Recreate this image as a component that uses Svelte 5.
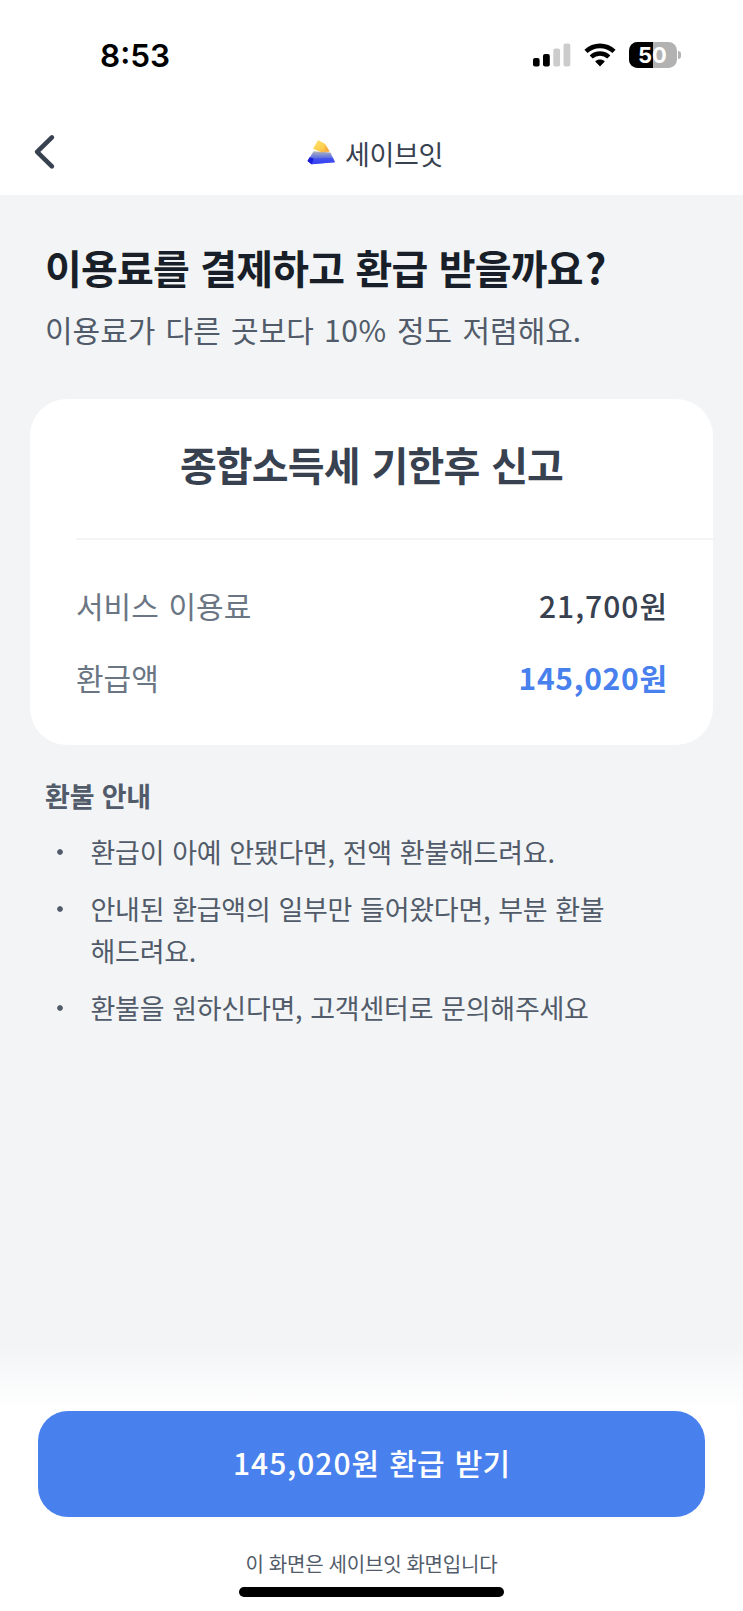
<script>
    let serviceFee = $state(21700);
    let refund = $state(145020);
    let battery = $state(50);

    let rows = $derived([
        { label: '서비스 이용료', amount: serviceFee, highlight: false },
        { label: '환급액', amount: refund, highlight: true }
    ]);

    const notices = [
        { id: 'full', text: '환급이 아예 안됐다면, 전액 환불해드려요.' },
        { id: 'partial', text: '안내된 환급액의 일부만 들어왔다면, 부분 환불해드려요.' },
        { id: 'contact', text: '환불을 원하신다면, 고객센터로 문의해주세요' }
    ];

    function formatNumber(value) {
        return value.toLocaleString('en-US');
    }
</script>

<div class="screen">
    <div class="status-bar">
        <span class="clock">8:53</span>
        <div class="status-icons">
            <svg class="signal" width="38" height="24" viewBox="0 0 38 24">
                <rect x="0" y="15" width="6.6" height="8.6" rx="2" fill="#000" />
                <rect x="10" y="11" width="6.8" height="12.6" rx="2" fill="#000" />
                <rect x="20.3" y="5.5" width="6.8" height="18.1" rx="2" fill="#ccc" />
                <rect x="30.5" y="0.4" width="6.8" height="23.2" rx="2" fill="#ccc" />
            </svg>
            <svg class="wifi" width="32" height="24" viewBox="0 0 32 24">
                <path d="M2 8.4C10 1 22 1 30 8.4" fill="none" stroke="#000" stroke-width="4.6" />
                <path d="M7.2 14C12.2 9.3 19.8 9.3 24.8 14" fill="none" stroke="#000" stroke-width="4.4" />
                <path d="M11.2 18.4C14 16 18 16 20.8 18.4L16 23.4Z" fill="#000" />
            </svg>
            <div class="battery">
                <div class="battery-fill" style="width: {battery}%"></div>
                <span class="battery-text">{battery}</span>
            </div>
            <div class="battery-cap"></div>
        </div>
    </div>

    <header class="nav">
        <button class="back-btn" aria-label="뒤로">
            <svg width="24" height="38" viewBox="0 0 24 38">
                <path d="M18.9 4.4L4.1 18.9L18.9 33.4" fill="none" stroke="#384150" stroke-width="4.6" stroke-linecap="round" stroke-linejoin="round" />
            </svg>
        </button>
        <div class="brand">
            <svg width="28" height="26" viewBox="0 0 28 26">
                <defs>
                    <linearGradient id="gold" x1="0.2" y1="0" x2="0.9" y2="1">
                        <stop offset="0" stop-color="#ffe06a" />
                        <stop offset="0.6" stop-color="#fdce4e" />
                        <stop offset="1" stop-color="#f7a93f" />
                    </linearGradient>
                    <linearGradient id="stone" x1="0" y1="0" x2="0" y2="1">
                        <stop offset="0" stop-color="#b9b8ae" />
                        <stop offset="0.3" stop-color="#7f8cd6" />
                        <stop offset="0.65" stop-color="#4a59e8" />
                        <stop offset="1" stop-color="#2c34f0" />
                    </linearGradient>
                </defs>
                <path d="M6.6 12.2L23.4 13.4L28 23.2L4.6 25.2L0.5 22Z" fill="url(#stone)" />
                <path d="M2.6 18.2L7 19.8L4.6 25.2L0.5 22Z" fill="#1a1cdc" />
                <path d="M7 19.8L26 18.8L28 23.2L4.6 25.2Z" fill="#3a46f4" opacity="0.6" />
                <path d="M11.2 1L17.8 4.8L22.6 12.4L14.2 13.2L6 9.8Z" fill="url(#gold)" />
                <path d="M17.8 4.8L22.6 12.4L18.4 12.8Z" fill="#f6a53c" opacity="0.7" />
            </svg>
            <span>세이브잇</span>
        </div>
    </header>

    <main class="content">
        <h1>이용료를 결제하고 환급 받을까요<span class="question">?</span></h1>
        <p class="subtitle">이용료가 다른 곳보다 <span class="percent">10%</span> 정도 저렴해요.</p>

        <section class="card">
            <h2>종합소득세 기한후 신고</h2>
            <div class="divider"></div>
            {#each rows as row}
                <div class="row">
                    <span class="label">{row.label}</span>
                    <span class="amount" class:highlight={row.highlight}>
                        <span class="digits">{formatNumber(row.amount)}</span>원
                    </span>
                </div>
            {/each}
        </section>

        <section class="notice">
            <h3>환불 안내</h3>
            <ul>
                {#each notices as notice (notice.id)}
                    <li>{notice.text}</li>
                {/each}
            </ul>
        </section>
    </main>

    <footer class="bottom">
        <button class="cta"><span class="digits">{formatNumber(refund)}</span>원 환급 받기</button>
        <p class="caption">이 화면은 세이브잇 화면입니다</p>
        <div class="home-indicator"></div>
    </footer>
</div>

<style>
    :global(body) {
        background: #fff;
    }

    .screen {
        display: flex;
        flex-direction: column;
        width: 743px;
        height: 1611px;
        overflow: hidden;
        background: #fff;
        color: #384150;
        font-family: 'Noto Sans CJK KR', sans-serif;
    }

    h1, h2, h3, p, ul {
        margin: 0;
        padding: 0;
    }

    button {
        border: none;
        padding: 0;
        font-family: inherit;
        cursor: pointer;
    }

    .status-bar {
        display: flex;
        justify-content: space-between;
        align-items: center;
        height: 110px;
        padding: 0 62px 0 100px;
        box-sizing: border-box;
        color: #000;
    }

    .clock {
        padding-top: 2px;
        font-family: Inter, sans-serif;
        font-size: 31.5px;
        font-weight: 600;
        line-height: 40px;
    }

    .status-icons {
        display: flex;
        align-items: center;
    }

    .wifi {
        margin-left: 13px;
    }

    .battery {
        position: relative;
        width: 48px;
        height: 26px;
        margin-left: 13px;
        border-radius: 8.5px;
        background: #b2b2b2;
        overflow: hidden;
    }

    .battery-fill {
        height: 100%;
        background: #000;
    }

    .battery-text {
        position: absolute;
        inset: 0 1px 0 0;
        color: #fff;
        font-family: Inter, sans-serif;
        font-size: 22px;
        font-weight: 700;
        line-height: 26px;
        text-align: center;
    }

    .battery-cap {
        width: 3px;
        height: 8px;
        margin-left: 1px;
        border-radius: 0 4px 4px 0;
        background: #b2b2b2;
    }

    .nav {
        display: grid;
        grid-template-columns: 60px 1fr 60px;
        align-items: center;
        height: 85px;
        padding-bottom: 1px;
        box-sizing: border-box;
    }

    .back-btn {
        display: flex;
        margin-left: 33px;
        background: none;
    }

    .brand {
        display: flex;
        justify-content: center;
        align-items: center;
        gap: 10px;
        padding-left: 7px;
        font-size: 27px;
        font-weight: 400;
        line-height: 36px;
        letter-spacing: -0.4px;
    }

    .brand span {
        padding-top: 3px;
    }

    .content {
        flex: 1;
        background: #f2f4f6;
    }

    h1 {
        padding: 42px 45px 0;
        color: #191f28;
        font-size: 40px;
        font-weight: 700;
        line-height: 60px;
        letter-spacing: -0.8px;
        word-spacing: 3px;
    }

    .question {
        margin-left: 2px;
        font-size: 42px;
        line-height: 1;
    }

    .subtitle {
        padding: 9px 45px 0;
        color: #515b69;
        font-size: 30px;
        line-height: 46px;
        word-spacing: 3.5px;
    }

    .percent {
        letter-spacing: 0.6px;
    }

    .card {
        width: 683px;
        height: 346px;
        margin: 47px 0 0 30px;
        border-radius: 37px;
        background: #fff;
    }

    h2 {
        padding-top: 35px;
        font-size: 40px;
        font-weight: 700;
        line-height: 60px;
        letter-spacing: -0.85px;
        word-spacing: 3.6px;
        text-align: center;
    }

    .divider {
        height: 1.5px;
        margin: 44px 0 29px 46px;
        background: #f2f4f6;
    }

    .row {
        display: flex;
        justify-content: space-between;
        padding: 0 46px;
        font-size: 30px;
        line-height: 72px;
        word-spacing: 3px;
    }

    .label {
        color: #6b7684;
    }

    .amount {
        font-weight: 500;
        word-spacing: 0;
    }

    .amount .digits {
        letter-spacing: 1px;
    }

    .highlight {
        color: #4880ee;
        font-weight: 700;
    }

    .amount.highlight .digits {
        letter-spacing: 0.7px;
    }

    .notice {
        padding: 31px 45px 0;
        color: #515b69;
    }

    h3 {
        font-size: 27px;
        font-weight: 700;
        line-height: 40px;
        letter-spacing: -0.2px;
        word-spacing: 1.5px;
    }

    ul {
        display: flex;
        flex-direction: column;
        gap: 15px;
        padding-top: 15px;
        list-style: none;
    }

    li {
        width: 530px;
        padding-left: 45.5px;
        font-size: 27px;
        line-height: 42px;
        letter-spacing: -0.25px;
        word-spacing: 2.1px;
        background: radial-gradient(circle at 15px 21px, #515b69 2.4px, transparent 3.2px);
    }

    .bottom {
        display: flex;
        flex-direction: column;
        align-items: center;
        height: 266px;
        padding-top: 65.5px;
        box-sizing: border-box;
        background: linear-gradient(#f2f4f6, #fff 65px);
    }

    .cta {
        flex: none;
        width: 667px;
        height: 106px;
        padding-bottom: 4px;
        border-radius: 30px;
        background: #4880ee;
        color: #fff;
        font-size: 30px;
        font-weight: 500;
        word-spacing: 3.5px;
    }

    .cta .digits {
        letter-spacing: 1px;
    }

    .caption {
        margin-top: 32.5px;
        color: #515b69;
        font-size: 20px;
        line-height: 30px;
        letter-spacing: -0.2px;
        word-spacing: 0.8px;
    }

    .home-indicator {
        width: 265px;
        height: 10px;
        margin-top: 8px;
        border-radius: 5px;
        background: #000;
    }
</style>
